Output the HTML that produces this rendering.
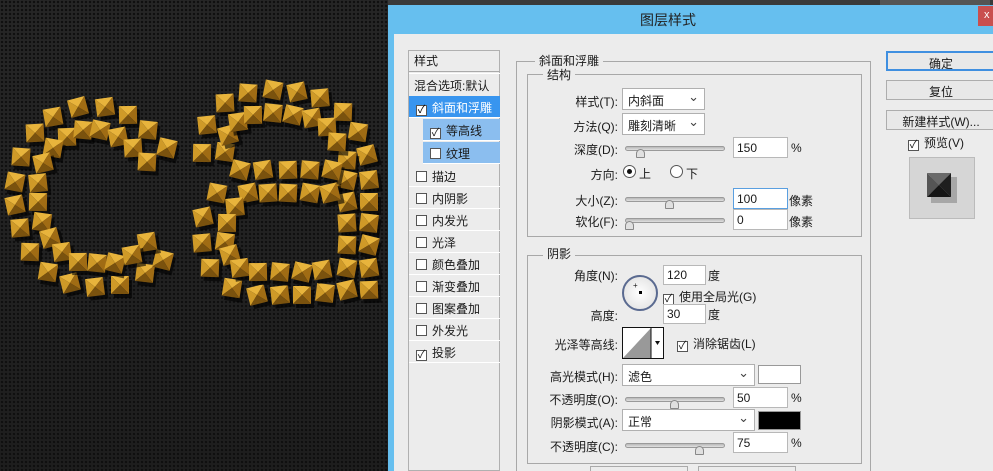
<!DOCTYPE html>
<html style="overflow:hidden;width:993px;height:471px"><head><meta charset="utf-8"><style>
*{margin:0;padding:0;box-sizing:border-box}
body{width:993px;height:471px;overflow:hidden;position:relative;background:#2a2a2a;font-family:"Liberation Sans","Noto Sans CJK SC",sans-serif;font-size:12px;color:#1a1a1a}
.a{position:absolute}
#bg{left:0;top:0;width:390px;height:471px;background:radial-gradient(circle,#0e0e0e 0.9px,transparent 1.4px) 0 0/4px 4px,linear-gradient(#262626,#1e1e1e)}
#top{left:388px;top:0;width:605px;height:6px;background:#3a3a3a}
#dlg{left:388px;top:5px;width:605px;height:466px;background:#66bfef}
#body{left:394px;top:34px;width:599px;height:437px;background:#ececec}
.lbl{position:absolute;text-align:right;white-space:nowrap}
.box{position:absolute;border:1px solid #a8a8a8}
.inp{position:absolute;background:#fff;border:1px solid #b8b8b8;height:21px;padding:3px 3px;font-size:12px}
.dd{position:absolute;background:#fff;border:1px solid #b0b0b0;height:22px;padding:3px 5px}
.dd:after{content:"⌄";position:absolute;right:5px;top:0px;font-size:13px;color:#444}
.cb{display:inline-block;width:11px;height:11px;border:1px solid #555;background:#fff;vertical-align:-1px;margin-right:5px;position:relative;font-size:11px;line-height:9px;text-align:center}
.sl{position:absolute;height:5px;width:100px;border-radius:3px;background:linear-gradient(#b8b8b8,#e0e0e0);border:1px solid #9a9a9a}
.th{position:absolute;top:2px;width:9px;height:9px;background:#e0e0e0;border:1px solid #888;border-radius:5px 5px 1px 1px}
.row{position:absolute;left:409px;width:91px;height:22px;padding:3px 0 0 7px;border-bottom:1px solid #fff;white-space:nowrap}
.btn{position:absolute;left:886px;width:110px;height:20px;border:1px solid #adadad;background:#e8e8e8;text-align:center;padding-top:2px}
</style></head><body>
<div class="a" id="bg"></div>
<svg class="a" style="left:0;top:0" width="390" height="471">
<defs>
<g id="s"><rect x="-6" y="-5" width="18" height="18" fill="#000" opacity=".6"/>
<polygon points="-9,-9 9,-9 0,0" fill="#e8b43c"/><polygon points="-9,-9 0,0 -9,9" fill="#cf9a28"/><polygon points="9,-9 9,9 0,0" fill="#a06c14"/><polygon points="-9,9 0,0 9,9" fill="#7a520e"/></g>
</defs>
<g id="studs"></g>
</svg>
<div class="a" id="top"></div>
<div class="a" style="left:880px;top:0;width:110px;height:5px;background:#555"></div>
<div class="a" id="dlg"></div>
<div class="a" style="left:388px;top:5px;width:605px;height:29px;background:#66bfef"></div>
<div class="a" style="left:978px;top:6px;width:15px;height:20px;background:#c94f4f;color:#fff;font-size:11px;padding:3px 0 0 6px">x</div>
<div class="a" style="left:640px;top:10px;font-size:14px;color:#222">图层样式</div>
<div class="a" id="body"></div>

<div class="box" style="left:408px;top:50px;width:92px;height:421px;background:#ececec;border-color:#b0b0b0"></div>
<div class="a" style="left:414px;top:52px">样式</div>
<div class="a" style="left:409px;top:71px;width:91px;height:3px;border-top:1px solid #aaa;border-bottom:1px solid #fff"></div>
<div class="a" style="left:414px;top:77px">混合选项:默认</div>
<div class="row" style="top:96px;background:#3895ef;color:#fff"><span class="cb" style="color:#000">✓</span>斜面和浮雕</div>
<div class="row" style="top:119px;left:423px;width:77px;background:#8bbeef"><span class="cb">✓</span>等高线</div>
<div class="row" style="top:142px;left:423px;width:77px;background:#8bbeef"><span class="cb"></span>纹理</div>
<div class="row" style="top:165px"><span class="cb"></span>描边</div>
<div class="row" style="top:187px"><span class="cb"></span>内阴影</div>
<div class="row" style="top:209px"><span class="cb"></span>内发光</div>
<div class="row" style="top:231px"><span class="cb"></span>光泽</div>
<div class="row" style="top:253px"><span class="cb"></span>颜色叠加</div>
<div class="row" style="top:275px"><span class="cb"></span>渐变叠加</div>
<div class="row" style="top:297px"><span class="cb"></span>图案叠加</div>
<div class="row" style="top:319px"><span class="cb"></span>外发光</div>
<div class="row" style="top:341px"><span class="cb">✓</span>投影</div>

<div class="box" style="left:516px;top:61px;width:355px;height:420px;border-bottom:none;height:410px"></div>
<div class="a" style="left:535px;top:52px;background:#ececec;padding:0 4px">斜面和浮雕</div>
<div class="box" style="left:527px;top:74px;width:335px;height:163px"></div>
<div class="a" style="left:543px;top:66px;background:#ececec;padding:0 4px">结构</div>
<div class="lbl" style="left:540px;width:78px;top:93px">样式(T):</div>
<div class="dd" style="left:622px;top:88px;width:83px">内斜面</div>
<div class="lbl" style="left:540px;width:78px;top:118px">方法(Q):</div>
<div class="dd" style="left:622px;top:113px;width:83px">雕刻清晰</div>
<div class="lbl" style="left:540px;width:78px;top:141px">深度(D):</div>
<div class="sl" style="left:625px;top:146px"><div class="th" style="left:10px"></div></div>
<div class="inp" style="left:733px;top:137px;width:55px">150</div>
<div class="a" style="left:791px;top:141px">%</div>
<div class="lbl" style="left:540px;width:78px;top:166px">方向:</div>
<div class="a" style="left:623px;top:165px;width:13px;height:13px;border:1px solid #555;border-radius:50%;background:#fff"><div class="a" style="left:3px;top:3px;width:5px;height:5px;border-radius:50%;background:#111"></div></div>
<div class="a" style="left:639px;top:165px">上</div>
<div class="a" style="left:670px;top:165px;width:13px;height:13px;border:1px solid #555;border-radius:50%;background:#fff"></div>
<div class="a" style="left:686px;top:165px">下</div>
<div class="lbl" style="left:540px;width:78px;top:192px">大小(Z):</div>
<div class="sl" style="left:625px;top:197px"><div class="th" style="left:39px"></div></div>
<div class="inp" style="left:733px;top:188px;width:55px;border-color:#5a9fe0">100</div>
<div class="a" style="left:789px;top:192px">像素</div>
<div class="lbl" style="left:540px;width:78px;top:213px">软化(F):</div>
<div class="sl" style="left:625px;top:218px"><div class="th" style="left:-1px"></div></div>
<div class="inp" style="left:733px;top:209px;width:55px">0</div>
<div class="a" style="left:789px;top:213px">像素</div>

<div class="box" style="left:527px;top:255px;width:335px;height:209px"></div>
<div class="a" style="left:543px;top:245px;background:#ececec;padding:0 4px">阴影</div>
<div class="lbl" style="left:540px;width:78px;top:267px">角度(N):</div>
<div class="inp" style="left:663px;top:265px;width:43px;height:20px;padding:2px 3px">120</div>
<div class="a" style="left:708px;top:267px">度</div>
<div class="a" style="left:622px;top:275px;width:36px;height:36px;border:2px solid #5a6a90;border-radius:50%;background:radial-gradient(#fff,#ddd)"><div class="a" style="left:15px;top:14px;width:3px;height:3px;background:#000"></div><div class="a" style="left:9px;top:4px;font-size:8px">+</div></div>
<div class="a" style="left:663px;top:288px"><span class="cb">✓</span>使用全局光(G)</div>
<div class="lbl" style="left:540px;width:78px;top:307px">高度:</div>
<div class="inp" style="left:663px;top:304px;width:43px;height:20px;padding:2px 3px">30</div>
<div class="a" style="left:708px;top:306px">度</div>
<div class="lbl" style="left:540px;width:78px;top:336px">光泽等高线:</div>
<div class="a" style="left:622px;top:327px;width:42px;height:32px;border:1px solid #111;background:#fff">
<svg width="40" height="30" style="position:absolute;left:0;top:0"><polygon points="0,30 28,0 28,30" fill="#999"/><line x1="28" y1="0" x2="28" y2="30" stroke="#111"/><polygon points="32,13 37,13 34.5,17" fill="#111"/></svg></div>
<div class="a" style="left:677px;top:335px"><span class="cb">✓</span>消除锯齿(L)</div>
<div class="lbl" style="left:540px;width:78px;top:368px">高光模式(H):</div>
<div class="dd" style="left:622px;top:364px;width:133px">滤色</div>
<div class="a" style="left:758px;top:365px;width:43px;height:19px;border:1px solid #999;background:#fff"></div>
<div class="lbl" style="left:540px;width:78px;top:391px">不透明度(O):</div>
<div class="sl" style="left:625px;top:397px"><div class="th" style="left:44px"></div></div>
<div class="inp" style="left:733px;top:387px;width:55px">50</div>
<div class="a" style="left:791px;top:391px">%</div>
<div class="lbl" style="left:540px;width:78px;top:414px">阴影模式(A):</div>
<div class="dd" style="left:622px;top:409px;width:133px">正常</div>
<div class="a" style="left:758px;top:411px;width:43px;height:19px;border:1px solid #999;background:#000"></div>
<div class="lbl" style="left:540px;width:78px;top:438px">不透明度(C):</div>
<div class="sl" style="left:625px;top:443px"><div class="th" style="left:69px"></div></div>
<div class="inp" style="left:733px;top:432px;width:55px">75</div>
<div class="a" style="left:791px;top:436px">%</div>
<div class="a" style="left:590px;top:466px;width:98px;height:5px;border:1px solid #aaa;border-bottom:none"></div>
<div class="a" style="left:698px;top:466px;width:98px;height:5px;border:1px solid #aaa;border-bottom:none"></div>

<div class="btn" style="top:51px;border:2px solid #3f8fe0">确定</div>
<div class="btn" style="top:80px">复位</div>
<div class="btn" style="top:110px">新建样式(W)...</div>
<div class="a" style="left:908px;top:134px"><span class="cb">✓</span>预览(V)</div>
<div class="a" style="left:909px;top:157px;width:66px;height:62px;border:1px solid #bbb;background:#d6d6d6">
<svg width="64" height="60"><rect x="21" y="19" width="26" height="26" fill="#777" opacity=".5"/><polygon points="17,15 41,15 29,27" fill="#6a6a6a"/><polygon points="17,15 29,27 17,39" fill="#555"/><polygon points="41,15 41,39 29,27" fill="#1e1e1e"/><polygon points="17,39 29,27 41,39" fill="#151515"/></svg></div>

<script>
var p=[[78,107],[105,107],[128,115],[148,130],[167,148],[53,117],[35,133],[21,157],[15,182],[15,205],[20,228],[30,252],[48,272],[70,283],[95,287],[120,285],[145,273],[163,260],[147,242],
[67,137],[83,130],[100,130],[118,137],[133,148],[147,162],[53,148],[43,163],[38,183],[38,202],[42,222],[50,238],[62,252],[78,262],[97,263],[115,263],[132,255],
[225,103],[248,93],[273,90],[297,92],[320,98],[343,112],[358,132],[367,155],[369,180],[369,202],[369,223],[369,245],[369,268],[369,290],
[347,160],[347,180],[347,202],[347,223],[347,245],[347,268],[347,290],
[207,125],[202,153],[225,152],[228,135],[238,122],[253,115],[273,113],[293,115],[312,118],[327,127],[337,142],
[217,193],[203,217],[202,243],[210,268],[232,288],[257,295],[280,295],[302,295],[325,293],
[240,170],[263,170],[288,170],[310,170],[332,170],[248,193],[268,193],[288,193],[310,193],[330,193],
[235,207],[227,223],[225,242],[230,255],[240,268],[258,272],[280,272],[302,272],[322,270]];
var g=document.getElementById('studs'),h='';
p.forEach(function(c,i){h+='<use href="#s" transform="translate('+c[0]+','+c[1]+') rotate('+((i*37)%30-15)+')"/>';});
g.innerHTML=h;
</script>
</body></html>
